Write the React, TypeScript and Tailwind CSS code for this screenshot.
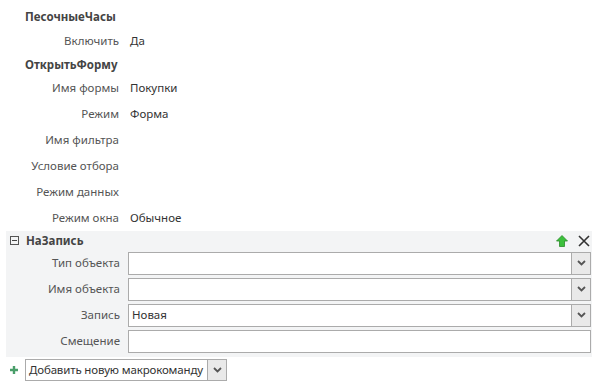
import React from "react";

const font = { fontFamily: '"Segoe UI", "Noto Sans", "Open Sans", sans-serif' };

function Chevron() {
  return (
    <svg width="9" height="6" viewBox="0 0 9 6">
      <path d="M1 1 L4.5 4.5 L8 1" stroke="#555" strokeWidth="1.8" fill="none" />
    </svg>
  );
}

function ParamRow({ label, value }: { label: string; value?: string }) {
  return (
    <div className="flex h-[26px] items-center whitespace-nowrap text-[11.5px]">
      <div className="w-[120px] pr-[1px] text-right text-[#555]">{label}</div>
      <div className="pl-[10px] text-[#333]">{value}</div>
    </div>
  );
}

function Field({ label, value, combo }: { label: string; value?: string; combo?: boolean }) {
  return (
    <div className="flex h-[26px] items-center whitespace-nowrap text-[11.5px]">
      <div className="w-[114px] text-right text-[#555]">{label}</div>
      <div className="ml-[8px] flex h-[23px] flex-1 items-center border border-[#ababab] bg-white">
        <div className="flex-1 pl-[3px] text-[#333]">{value}</div>
        {combo && (
          <div className="flex h-full w-[19px] items-center justify-center border-l border-[#ababab] bg-[#e9e9e9]">
            <Chevron />
          </div>
        )}
      </div>
    </div>
  );
}

export default function App() {
  return (
    <div className="h-[387px] w-[602px] bg-white pt-[5px]" style={font}>
      <div className="flex h-[23px] items-center pl-[25px] text-[11.5px] font-bold text-[#444]">ПесочныеЧасы</div>
      <ParamRow label="Включить" value="Да" />
      <div className="flex h-[21px] items-center pl-[25px] text-[11.5px] font-bold text-[#444]">ОткрытьФорму</div>
      <ParamRow label="Имя формы" value="Покупки" />
      <ParamRow label="Режим" value="Форма" />
      <ParamRow label="Имя фильтра" />
      <ParamRow label="Условие отбора" />
      <ParamRow label="Режим данных" />
      <ParamRow label="Режим окна" value="Обычное" />

      <div className="mx-[6px] w-[586px] bg-[#f3f4f5] pb-[3px] pr-[1px]">
        <div className="flex h-[19px] items-center">
          <div className="ml-[4px] flex h-[9px] w-[9px] items-center justify-center border border-[#555]">
            <div className="h-[1px] w-[5px] bg-[#444]" />
          </div>
          <div className="ml-[7px] flex-1 text-[11.5px] font-bold text-[#444]">НаЗапись</div>
          <svg width="12" height="12" viewBox="0 0 12 12" className="mr-[10px]">
            <path d="M6 0.5 L11.5 6 L8.5 6 L8.5 11.5 L3.5 11.5 L3.5 6 L0.5 6 Z" fill="#3cc03c" stroke="#2a8a2a" strokeWidth="0.8" />
          </svg>
          <svg width="12" height="12" viewBox="0 0 12 12" className="mr-[1px]">
            <path d="M1 1 L11 11 M11 1 L1 11" stroke="#333" strokeWidth="1.6" />
          </svg>
        </div>
        <Field label="Тип объекта" combo />
        <Field label="Имя объекта" combo />
        <Field label="Запись" value="Новая" combo />
        <Field label="Смещение" />
      </div>

      <div className="mt-[2px] flex items-center">
        <svg width="8" height="8" viewBox="0 0 8 8" className="ml-[10px] mr-[7px]">
          <path d="M4 0 V8 M0 4 H8" stroke="#4a9e6a" strokeWidth="2.4" />
        </svg>
        <div className="flex h-[22px] w-[202px] items-center whitespace-nowrap border border-[#ababab] bg-white text-[11.5px] tracking-[-0.15px] text-[#333]">
          <div className="flex-1 overflow-hidden pl-[3px]">Добавить новую макрокоманду</div>
          <div className="flex h-full w-[19px] shrink-0 items-center justify-center border-l border-[#ababab] bg-[#e9e9e9]">
            <Chevron />
          </div>
        </div>
      </div>
    </div>
  );
}
